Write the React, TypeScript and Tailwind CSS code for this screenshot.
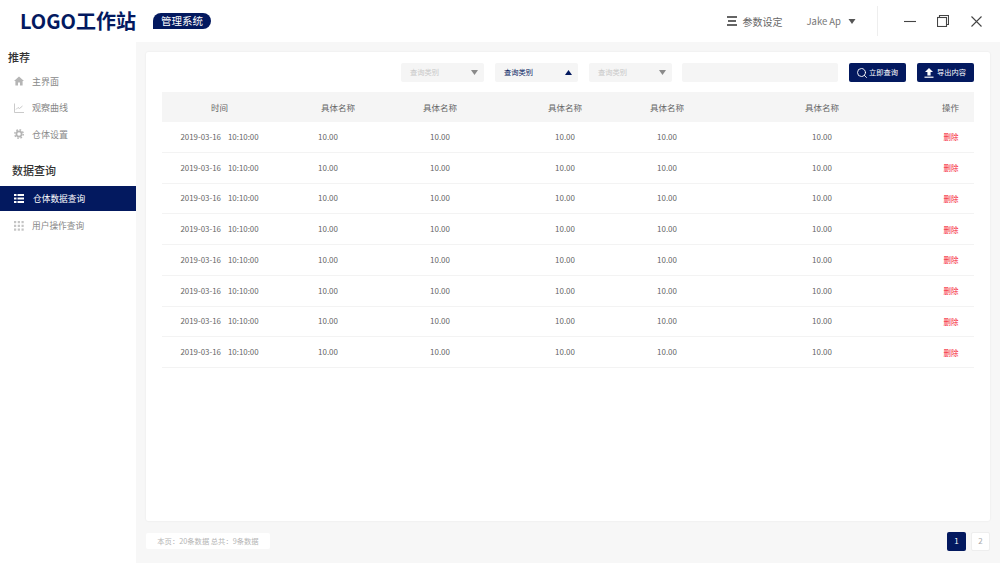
import { Search } from 'lucide-react';

const navy = 'bg-[#03195f]';

const rows = Array.from({ length: 8 });

function Caret({ up, className }: { up?: boolean; className: string }) {
  return (
    <svg width="7" height="5" viewBox="0 0 7 5" className={className}>
      <path d={up ? 'M3.5 0 L7 5 L0 5 Z' : 'M0 0 L7 0 L3.5 5 Z'} fill="currentColor" />
    </svg>
  );
}

function MenuIcon() {
  return (
    <svg width="10" height="10" viewBox="0 0 10 10" stroke="#333" strokeWidth="1.4">
      <path d="M0 1 H10 M1 5 H9 M0 9 H10" />
    </svg>
  );
}

function MinimizeIcon() {
  return (
    <svg width="12" height="12" viewBox="0 0 12 12" stroke="#444" strokeWidth="1.1">
      <path d="M0 6.5 H12" />
    </svg>
  );
}

function RestoreIcon() {
  return (
    <svg width="12" height="12" viewBox="0 0 12 12" fill="none" stroke="#444" strokeWidth="1.1">
      <rect x="0.5" y="2.5" width="9" height="9" />
      <path d="M2.5 2.5 V0.5 H11.5 V9.5 H9.5" />
    </svg>
  );
}

function CloseIcon() {
  return (
    <svg width="11" height="11" viewBox="0 0 11 11" stroke="#444" strokeWidth="1.1">
      <path d="M0.5 0.5 L10.5 10.5 M10.5 0.5 L0.5 10.5" />
    </svg>
  );
}

function HomeIcon() {
  return (
    <svg width="10" height="10" viewBox="0 0 10 10" fill="#b5b5b5">
      <path d="M5 0.5 L10 5 H8.6 V9.5 H6 V6.5 H4 V9.5 H1.4 V5 H0 Z" />
    </svg>
  );
}

function ChartIcon() {
  return (
    <svg width="10" height="10" viewBox="0 0 10 10" fill="none" stroke="#bdbdbd" strokeWidth="0.8">
      <path d="M0.5 0.5 V9.5 H10" />
      <path d="M2 6.5 L4 4.5 L5.5 5.5 L8.5 3" />
    </svg>
  );
}

function GearIcon() {
  return (
    <svg width="10" height="10" viewBox="0 0 10 10" fill="none" stroke="#b5b5b5">
      <circle cx="5" cy="5" r="2.6" strokeWidth="1.7" />
      <circle cx="5" cy="5" r="4.2" strokeWidth="1.5" strokeDasharray="1.65 1.65" />
    </svg>
  );
}

function ListIcon() {
  return (
    <svg width="10" height="9" viewBox="0 0 10 9" fill="#fff">
      <rect x="0" y="0" width="2.5" height="2" />
      <rect x="3.5" y="0" width="6.5" height="2" />
      <rect x="0" y="3.5" width="2.5" height="2" />
      <rect x="3.5" y="3.5" width="6.5" height="2" />
      <rect x="0" y="7" width="2.5" height="2" />
      <rect x="3.5" y="7" width="6.5" height="2" />
    </svg>
  );
}

function GridIcon() {
  return (
    <svg width="10" height="10" viewBox="0 0 10 10" fill="#c4c4c4">
      {[0, 3.75, 7.5].map((y) =>
        [0, 3.75, 7.5].map((x) => <rect key={`${x}-${y}`} x={x} y={y} width="2.2" height="2.2" />)
      )}
    </svg>
  );
}

function UploadIcon() {
  return (
    <svg width="10" height="10" viewBox="0 0 10 10" fill="#fff">
      <path d="M5 0 L9 4 H6.6 V7.4 H3.4 V4 H1 Z" />
      <rect x="0.5" y="8.6" width="9" height="1.2" />
    </svg>
  );
}

function Select({ active }: { active?: boolean }) {
  return (
    <div className="flex h-[19px] w-[83px] items-center justify-between rounded-[2px] bg-[#f5f5f5] pl-[9px] pr-[6px]">
      <span className={`text-[7.25px] ${active ? 'text-[#03195f]' : 'text-[#c8c8c8]'}`}>查询类别</span>
      <Caret up={active} className={active ? 'text-[#03195f]' : 'text-[#8a8a8a]'} />
    </div>
  );
}

function Row({ children, head }: { children: React.ReactNode; head?: boolean }) {
  return (
    <div
      className={`grid grid-cols-[150px_52px_152px_98px_106px_204px_50px] items-center text-center ${
        head ? 'h-[30px] bg-[#f5f5f5] text-[8.5px] text-[#666]' : 'h-[30.75px] border-b border-[#f3f3f3] text-[8px] text-[#666]'
      }`}
    >
      {children}
    </div>
  );
}

export default function App() {
  return (
    <div className="flex h-[563px] w-[1000px] flex-col overflow-hidden bg-white font-['Noto_Sans_CJK_SC','Noto_Sans',sans-serif]">
      {/* Header */}
      <header className="flex h-[42px] shrink-0 items-center pl-[20px]">
        <span className="text-[20px] font-bold leading-none text-[#03195f]">LOGO工作站</span>
        <span className={`ml-[17px] flex h-[16px] w-[58px] items-center justify-center rounded-full rounded-bl-[5px] ${navy} text-[10.5px] text-white`}>
          管理系统
        </span>
        <div className="ml-auto flex items-center">
          <MenuIcon />
          <span className="ml-[5px] text-[10px] text-[#666]">参数设定</span>
          <span className="ml-[24px] text-[9.5px] text-[#777]">Jake Ap</span>
          <span className="ml-[7px]"><Caret className="h-[5px] w-[8px] text-[#555]" /></span>
          <div className="ml-[21px] h-[30px] w-px bg-[#eee]" />
          <span className="ml-[26px]"><MinimizeIcon /></span>
          <span className="ml-[21px]"><RestoreIcon /></span>
          <span className="ml-[22px] mr-[18px]"><CloseIcon /></span>
        </div>
      </header>

      <div className="flex min-h-0 flex-1">
        {/* Sidebar */}
        <aside className="w-[136px] shrink-0 bg-white">
          <h2 className="pl-[8px] pt-[7px] text-[11px] font-medium leading-[17px] text-[#333]">推荐</h2>
          <nav className="mt-[2px] text-[9px] text-[#888]">
            <div className="flex h-[26.5px] items-center pl-[14px]">
              <HomeIcon />
              <span className="ml-[8px]">主界面</span>
            </div>
            <div className="flex h-[26.5px] items-center pl-[14px]">
              <ChartIcon />
              <span className="ml-[8px]">观察曲线</span>
            </div>
            <div className="flex h-[26.5px] items-center pl-[14px]">
              <GearIcon />
              <span className="ml-[8px]">仓体设置</span>
            </div>
          </nav>
          <h2 className="mt-[14px] pl-[12px] text-[11px] font-medium leading-[17px] text-[#333]">数据查询</h2>
          <div className={`mt-[7.5px] flex h-[25px] items-center pl-[14px] ${navy} text-[8.7px] text-white`}>
            <ListIcon />
            <span className="ml-[9px]">仓体数据查询</span>
          </div>
          <div className="flex h-[30px] items-center pl-[14px] text-[8.7px] text-[#888]">
            <GridIcon />
            <span className="ml-[8px]">用户操作查询</span>
          </div>
        </aside>

        {/* Main */}
        <main className="flex min-w-0 flex-1 flex-col bg-[#f7f7f7] pl-[10px] pr-[10px] pt-[10px]">
          <section className="h-[469px] rounded-[2px] bg-white pl-[16px] pr-[16px] pt-[11px] shadow-[0_0_2px_rgba(0,0,0,0.08)]">
            <div className="flex items-center justify-end gap-[11px]">
              <Select />
              <Select active />
              <Select />
              <div className="-ml-[1px] h-[19px] w-[156px] rounded-[2px] bg-[#f5f5f5]" />
              <button className={`flex h-[19px] w-[57px] items-center rounded-[2px] pl-[6.5px] ${navy} text-[7.25px] text-white`}>
                <Search size={12} strokeWidth={1.8} />
                <span className="ml-[1.5px]">立即查询</span>
              </button>
              <button className={`flex h-[19px] w-[57px] items-center rounded-[2px] pl-[7px] ${navy} text-[7.25px] text-white`}>
                <UploadIcon />
                <span className="ml-[3px]">导出内容</span>
              </button>
            </div>

            <div className="mt-[10px]">
              <Row head>
                <span className="pr-[35px]">时间</span>
                <span>具体名称</span>
                <span>具体名称</span>
                <span>具体名称</span>
                <span>具体名称</span>
                <span>具体名称</span>
                <span className="pl-[3px]">操作</span>
              </Row>
              {rows.map((_, i) => (
                <Row key={i}>
                  <span className="pr-[35px] whitespace-pre text-[7.9px]">2019-03-16    10:10:00</span>
                  <span className="pr-[20px]">10.00</span>
                  <span>10.00</span>
                  <span>10.00</span>
                  <span>10.00</span>
                  <span>10.00</span>
                  <span className="pl-[4px] text-[7.5px] text-[#f5162f]">删除</span>
                </Row>
              ))}
            </div>
          </section>

          {/* Pagination */}
          <div className="mt-[10px] flex h-[20px] items-center justify-between">
            <div className="flex h-[16px] w-[124px] items-center justify-center rounded-[2px] bg-white text-[7.3px] text-[#b5b5b5]">
              本页：20条数据 总共：9条数据
            </div>
            <div className="flex items-center gap-[5px]">
              <span className={`flex h-[19px] w-[19px] items-center justify-center rounded-[2px] ${navy} text-[8px] text-white`}>1</span>
              <span className="flex h-[19px] w-[19px] items-center justify-center rounded-[2px] border border-[#eee] bg-white text-[8px] text-[#aaa]">2</span>
            </div>
          </div>
        </main>
      </div>
    </div>
  );
}
